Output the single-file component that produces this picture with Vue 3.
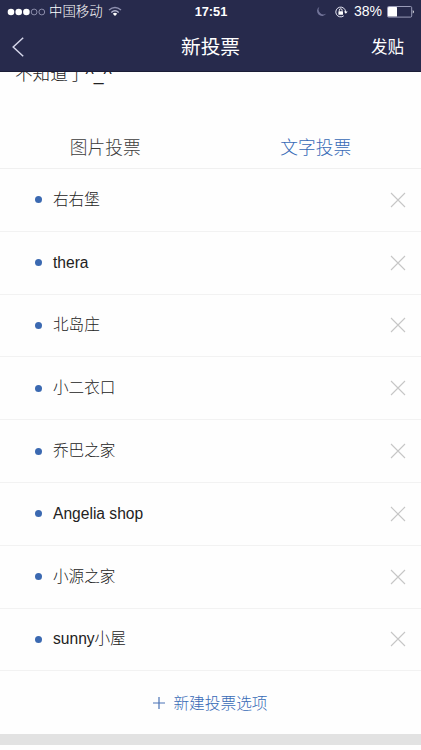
<script setup>
import { ref } from 'vue'

const options = ref(['右右堡', 'thera', '北岛庄', '小二衣口', '乔巴之家', 'Angelia shop', '小源之家', 'sunny小屋'])
const activeTab = ref('文字投票')
const tabs = ['图片投票', '文字投票']

function removeOption(index) {
  options.value.splice(index, 1)
}
</script>

<template>
  <div class="screen">
    <header class="header">
      <div class="status">
        <div class="status-side">
          <svg class="signal" width="39" height="8" viewBox="0 0 39 8">
            <g fill="#fff">
              <circle cx="4" cy="4" r="3.3" />
              <circle cx="11.7" cy="4" r="3.3" />
              <circle cx="19.4" cy="4" r="3.3" />
            </g>
            <g fill="none" stroke="#a3a5c2" stroke-width="0.8">
              <circle cx="27.1" cy="4" r="2.9" />
              <circle cx="34.8" cy="4" r="2.9" />
            </g>
          </svg>
          <span class="carrier">中国移动</span>
          <svg class="wifi" width="14" height="11" viewBox="0 0 14 11">
            <g fill="none" stroke-width="1.4">
              <path d="M1 4.1Q7-1.3 13 4.1" stroke="#8f91b0" />
              <path d="M3.3 6.4Q7 3.1 10.7 6.4" stroke="#b4b6d0" />
            </g>
            <path d="M4.8 7.7Q7 6 9.2 7.7L7 10Z" fill="#fff" />
          </svg>
        </div>
        <span class="time">17:51</span>
        <div class="status-side right">
          <svg class="moon" width="11" height="11" viewBox="0 0 11 11">
            <path d="M3.4 .7A5 5 0 1 0 10.3 7.6A5 5 0 0 1 3.4 .7Z" fill="#73759a" />
          </svg>
          <svg class="lock" width="13" height="12" viewBox="0 0 13 12">
            <path d="M10.6 6A4.9 4.9 0 1 0 8.8 9.8" fill="none" stroke="#e6e7f5" />
            <path d="M8.9 5.4H12.7L10.8 7.8Z" fill="#fff" />
            <rect x="3.4" y="5.3" width="4.6" height="3.5" rx=".4" fill="#fff" />
            <path d="M4.3 5.5V4.2a1.4 1.4 0 0 1 2.8 0V5.5" fill="none" stroke="#fff" stroke-width=".9" />
          </svg>
          <span class="percent">38%</span>
          <svg class="battery" width="28" height="12" viewBox="0 0 28 12">
            <rect x=".5" y=".5" width="24.2" height="10.6" rx="1.2" fill="none" stroke="#a7a9c5" stroke-width=".9" />
            <rect x="1" y="1" width="9" height="9.6" rx=".5" fill="#fff" />
            <path d="M25.8 4Q27.8 5.8 25.8 7.6Z" fill="#fff" />
          </svg>
        </div>
      </div>
      <nav class="navbar">
        <button class="back" aria-label="返回">
          <svg width="12" height="20" viewBox="0 0 12 20">
            <path d="M11.2.7 1.2 10l10 9.3" fill="none" stroke="#d4d5e9" stroke-width="1.5" />
          </svg>
        </button>
        <h1 class="title">新投票</h1>
        <button class="submit">发贴</button>
      </nav>
    </header>

    <section class="draft"><p class="draft-text">不知道了^_^</p></section>

    <div class="tabs">
      <button
        v-for="tab in tabs"
        :key="tab"
        class="tab"
        :class="{ active: tab === activeTab }"
        @click="activeTab = tab"
      >{{ tab }}</button>
    </div>

    <ul class="options">
      <li v-for="(option, index) in options" :key="option" class="option">
        <span class="dot"></span>
        <span class="name">{{ option }}</span>
        <button class="remove" aria-label="删除" @click="removeOption(index)">
          <svg width="16" height="16" viewBox="0 0 16 16">
            <path d="M1 1 15 15M15 1 1 15" fill="none" stroke="#c6c6c6" stroke-width="1.1" />
          </svg>
        </button>
      </li>
    </ul>

    <button class="add">
      <svg width="12" height="12" viewBox="0 0 12 12">
        <path d="M0 6H12M6 0V12" fill="none" stroke="#4a72b5" stroke-width="1.2" />
      </svg>
      <span>新建投票选项</span>
    </button>
    <div class="band"></div>
  </div>
</template>

<style>
body {
  background: #fefefe;
}
</style>

<style scoped>
.screen {
  height: 750px;
  overflow: hidden;
  display: flex;
  flex-direction: column;
  background: #fefefe;
  font-family: "Liberation Sans", "Noto Sans CJK SC", sans-serif;
  color: #222;
}
.screen > * {
  flex-shrink: 0;
}
button {
  border: 0;
  padding: 0;
  background: none;
  font: inherit;
  color: inherit;
  display: flex;
  align-items: center;
  justify-content: center;
}
svg {
  display: block;
  flex-shrink: 0;
}
.header {
  height: 72px;
  box-sizing: border-box;
  background: #272a4c;
  border-bottom: 1px solid #1b1d36;
  color: #fff;
}
.status {
  height: 23px;
  display: grid;
  grid-template-columns: 1fr auto 1fr;
  align-items: center;
  padding: 0 6px 0 7px;
  line-height: 23px;
}
.status-side {
  display: flex;
  align-items: center;
}
.right {
  justify-content: flex-end;
}
.carrier {
  margin-left: 3px;
  font-size: 13.4px;
  font-weight: 300;
}
.wifi {
  margin-left: 5px;
}
.time {
  font-size: 12.8px;
  font-weight: 700;
}
.lock {
  margin-left: 8px;
}
.percent {
  margin-left: 6px;
  font-size: 14px;
}
.battery {
  margin-left: 5px;
}
.navbar {
  height: 48px;
  display: grid;
  grid-template-columns: 1fr auto 1fr;
  align-items: center;
  padding: 0 17px 0 12px;
}
.back {
  justify-self: start;
}
.title {
  margin: 0 0 0 5px;
  font-size: 19.7px;
  font-weight: 400;
  line-height: 48px;
}
.submit {
  justify-self: end;
  font-size: 16.5px;
  line-height: 48px;
}
.draft {
  height: 52px;
  overflow: hidden;
  display: flex;
  align-items: flex-start;
  padding-left: 15px;
}
.draft-text {
  margin: -11px 0 0;
  font-size: 17.6px;
  font-weight: 300;
  line-height: 26px;
}
.tabs {
  height: 45px;
  box-sizing: border-box;
  display: grid;
  grid-template-columns: 1fr 1fr;
  border-bottom: 1px solid #f0f0f0;
}
.tab {
  font-size: 17.7px;
  font-weight: 300;
  color: #3c3c3c;
}
.tab.active {
  color: #376ab6;
}
.options {
  margin: 0;
  padding: 0;
  list-style: none;
}
.option {
  height: 62.8px;
  box-sizing: border-box;
  display: flex;
  align-items: center;
  padding: 0 15px 0 35px;
  border-bottom: 1px solid #f2f2f2;
}
.dot {
  width: 7px;
  height: 7px;
  border-radius: 50%;
  background: #3b69b1;
}
.name {
  margin-left: 11px;
  font-size: 15.6px;
  font-weight: 300;
  line-height: 24px;
}
.remove {
  margin-left: auto;
}
.add {
  height: 62.6px;
  gap: 8px;
  font-size: 15.7px;
  font-weight: 300;
  color: #376ab6;
}
.band {
  height: 11px;
  background: #e2e2e2;
}
</style>
